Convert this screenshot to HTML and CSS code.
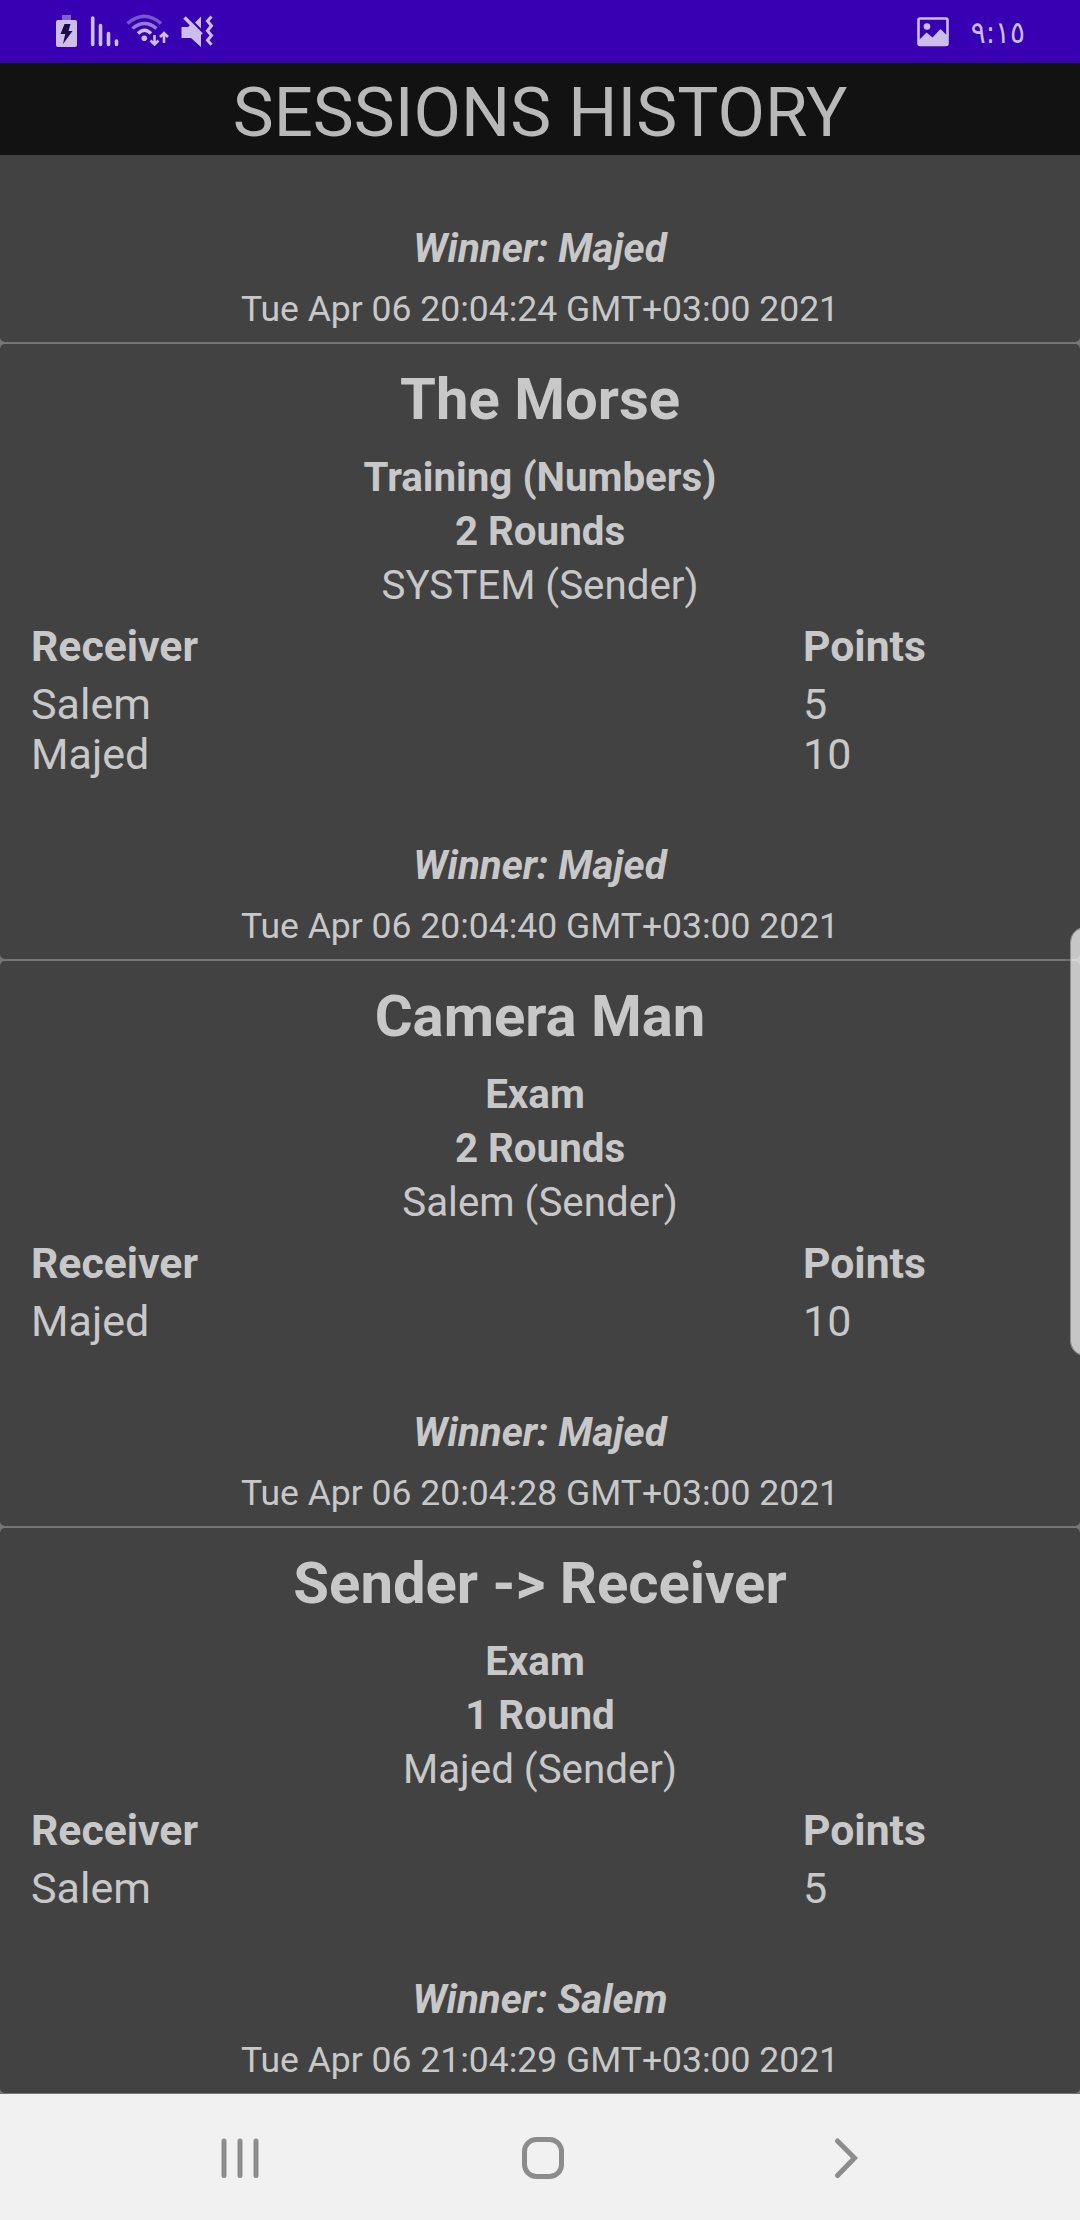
FILE: index.html
```html
<!DOCTYPE html>
<html lang="en">
<head>
<meta charset="utf-8">
<title>Sessions History</title>
<link rel="stylesheet" href="styles.css">
</head>
<body>
<div class="screen">
  <header class="status-bar">
    <svg class="status-icons" width="170" height="64" viewBox="50 0 170 64" fill="#cdbdea">
      <path d="M62 15h9v5h-9z" opacity=".5"/>
      <path d="M58 20h17q2 0 2 2v23q0 2-2 2H58q-2 0-2-2V22q0-2 2-2z"/>
      <path d="M64.500 24h6l-2 7h4L63 44l2.200-10H60.500z" fill="#1d0b4a"/>
      <g fill="none" stroke="#cdbdea" stroke-width="3.600" stroke-linecap="round">
        <path d="M92.700 18v26.500M100.500 25.500v19M108.500 33.500v11M116.500 41v3.500"/>
      </g>
      <g fill="none" stroke="#cdbdea" stroke-width="3.500">
        <path d="M127.500 23.500Q144.500 9 161 23.500" opacity=".45"/>
        <path d="M132.500 28.500Q144.500 18.500 156.500 28.500" opacity=".65"/>
        <path d="M138 33.500Q144.500 27 151 33.500"/>
      </g>
      <circle cx="144.300" cy="38.300" r="2.800"/>
      <g fill="none" stroke="#cdbdea" stroke-width="2.600">
        <path d="M154.500 35v9M150.500 40.500l4 4 4-4M164 43v-9M160 37l4-4 4 4"/>
      </g>
      <path d="M182 27h6l4-3.500 9 9V47l-10-9h-9.500V27z"/>
      <path d="M184.500 17.500l17 17" stroke="#cdbdea" stroke-width="3.500"/>
      <path d="M201 16.500v12l-6-6z"/>
      <path d="M211.500 16.500l-4 4.500 4 4.700-4 5 4 4.800-4 4.800 4 4.500" fill="none" stroke="#cdbdea" stroke-width="3"/>
    </svg>
    <div class="status-right">
      <svg width="32" height="30" viewBox="0 0 32 30">
        <rect x="1.500" y="1.500" width="29" height="26.500" rx="1.500" fill="none" stroke="#cdbdea" stroke-width="2.600"/>
        <circle cx="10" cy="9.500" r="3.300" fill="#cdbdea"/>
        <path d="M2 23l7.500-7.500 6 5L23.500 12l7 7V28H2z" fill="#cdbdea"/>
      </svg>
      <span class="clock">٩:١٥</span>
    </div>
  </header>

  <h1 class="title">SESSIONS HISTORY</h1>

  <main class="list">
    <article class="card card-cut">
      <p class="winner">Winner: Majed</p>
      <p class="date">Tue Apr 06 20:04:24 GMT+03:00 2021</p>
    </article>

    <article class="card">
      <h2 class="name">The Morse</h2>
      <p class="mode">Training (Numbers)</p>
      <p class="mode">2 Rounds</p>
      <p class="sender">SYSTEM (Sender)</p>
      <div class="scores">
        <b class="head">Receiver</b><b class="head">Points</b>
        <span>Salem</span><span>5</span>
        <span>Majed</span><span>10</span>
      </div>
      <p class="winner">Winner: Majed</p>
      <p class="date">Tue Apr 06 20:04:40 GMT+03:00 2021</p>
    </article>

    <article class="card">
      <h2 class="name">Camera Man</h2>
      <p class="mode">Exam&nbsp;</p>
      <p class="mode">2 Rounds</p>
      <p class="sender">Salem (Sender)</p>
      <div class="scores">
        <b class="head">Receiver</b><b class="head">Points</b>
        <span>Majed</span><span>10</span>
      </div>
      <p class="winner">Winner: Majed</p>
      <p class="date">Tue Apr 06 20:04:28 GMT+03:00 2021</p>
    </article>

    <article class="card">
      <h2 class="name">Sender -&gt; Receiver</h2>
      <p class="mode">Exam&nbsp;</p>
      <p class="mode">1 Round</p>
      <p class="sender">Majed (Sender)</p>
      <div class="scores">
        <b class="head">Receiver</b><b class="head">Points</b>
        <span>Salem</span><span>5</span>
      </div>
      <p class="winner">Winner: Salem</p>
      <p class="date">Tue Apr 06 21:04:29 GMT+03:00 2021</p>
    </article>
    <div class="scroll-thumb"></div>
  </main>

  <nav class="nav-bar">
    <svg width="40" height="44" viewBox="0 0 40 44" fill="none" stroke="#8c8c8c" stroke-width="5" stroke-linecap="round">
      <path d="M4 5v34.500M20 5v34.500M36 5v34.500"/>
    </svg>
    <svg class="home" width="44" height="44" viewBox="0 0 44 44" fill="none" stroke="#8c8c8c" stroke-width="5">
      <rect x="3.500" y="3.500" width="37" height="37" rx="12"/>
    </svg>
    <svg width="28" height="44" viewBox="0 0 28 44" fill="none" stroke="#8c8c8c" stroke-width="5" stroke-linecap="round">
      <path d="M4.500 5l17 17-17 17.500"/>
    </svg>
  </nav>
</div>
</body>
</html>
```
FILE: styles.css
```css
* { box-sizing: border-box; }

body {
  margin: 0;
  font-family: Roboto, "Liberation Sans", sans-serif;
  color: #c8c8c8;
}

h1, h2, p { margin: 0; }

.screen {
  width: 1080px;
  height: 2220px;
  display: flex;
  flex-direction: column;
  overflow: hidden;
}

.status-bar {
  height: 63px;
  flex: none;
  background: #3700b3;
  display: flex;
  justify-content: space-between;
  padding: 0 55px 0 50px;
  overflow: hidden;
}

.status-right {
  display: flex;
  align-items: center;
  gap: 22px;
}

.clock {
  font-family: "DejaVu Sans Condensed", "DejaVu Sans", sans-serif;
  font-stretch: condensed;
  font-size: 31px;
  letter-spacing: -2.7px;
  line-height: 60px;
  color: #cdbdea;
}

.title {
  height: 92px;
  flex: none;
  background: #121212;
  color: #b8b8b8;
  font-size: 69px;
  font-weight: 400;
  line-height: 99px;
  text-align: center;
}

.list {
  flex: none;
  height: 1939px;
  background: #757575;
  display: flex;
  flex-direction: column;
  gap: 2px;
  position: relative;
}

.card {
  background: #424242;
  border-radius: 5px;
  padding: 18px 0 10px;
  text-align: center;
}

.card-cut {
  padding-top: 67px;
  border-radius: 0 0 5px 5px;
}

.name {
  font-size: 58px;
  line-height: 75px;
  margin-bottom: 14px;
}

.mode,
.sender {
  font-size: 40.3px;
  line-height: 54px;
}

.mode { font-weight: 700; }

.scores {
  display: grid;
  grid-template-columns: 772px 1fr;
  padding: 8px 0 0 31px;
  margin-bottom: 60px;
  text-align: left;
  font-size: 43px;
  line-height: 50px;
}

.head {
  font-size: 42.7px;
  margin-bottom: 8px;
}

.winner {
  font-size: 40.3px;
  font-weight: 700;
  font-style: italic;
  line-height: 54px;
  margin-bottom: 10px;
}

.date {
  font-size: 35.5px;
  line-height: 46px;
}

.scroll-thumb {
  position: absolute;
  top: 772px;
  right: -21px;
  width: 31px;
  height: 429px;
  border: 1px solid rgba(160, 160, 160, .8);
  border-radius: 15px;
  background: rgba(250, 250, 250, .72);
  background-clip: padding-box;
}

.nav-bar {
  flex: 1;
  background: #f1f1f1;
  display: flex;
  justify-content: space-between;
  padding: 42px 219px 0 220px;
}

.home { margin-right: 7px; }
```
